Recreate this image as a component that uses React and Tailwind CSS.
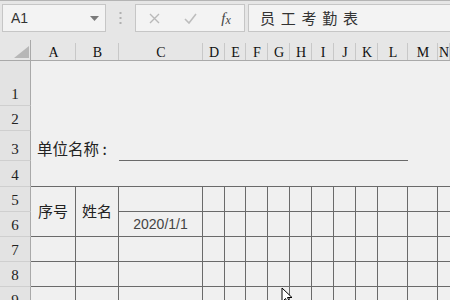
import React from "react";

const COLS = ["A", "B", "C", "D", "E", "F", "G", "H", "I", "J", "K", "L", "M", "N"];
const ROWS = [1, 2, 3, 4, 5, 6, 7, 8, 9];
const LINE = "border-[#6a6a6a]";

function RowHeader({ n }) {
  return (
    <div className="flex items-end justify-center border-r border-b border-r-[#a9a9a9] border-b-[#cfcfcf] bg-[#e3e3e3] pb-[3px] text-[15px] leading-[16px] text-[#222]" style={{ fontFamily: '"Liberation Serif", serif' }}>
      {n}
    </div>
  );
}

function cellClass(r, c) {
  const idx = COLS.indexOf(c);
  let cls = "flex items-center justify-center text-[#222]";
  if (r === 3 && idx >= 2 && idx <= 11) cls += ` border-b ${LINE}`;
  if (r === 4) cls += ` border-b ${LINE}`;
  if (r >= 5) {
    cls += ` border-b ${LINE}`;
    if (c !== "N") cls += " border-r";
  }
  return cls;
}

function Body() {
  const out = [];
  ROWS.forEach((r) => {
    out.push(<RowHeader key={"h" + r} n={r} />);
    COLS.forEach((c) => {
      if (r === 6 && (c === "A" || c === "B")) return;
      const k = c + r;
      if (r === 3 && c === "A") {
        out.push(
          <div key={k} className="col-span-2 flex items-end whitespace-nowrap pb-[3px] pl-[6px] text-[15.5px] leading-[20px] text-[#222]" style={{ fontFamily: '"Noto Sans CJK SC", sans-serif' }}>
            单位名称 :
          </div>
        );
        return;
      }
      if (r === 3 && c === "B") return;
      if (r === 5 && (c === "A" || c === "B")) {
        out.push(
          <div key={k} className={`row-span-2 flex items-center justify-center border-r border-b ${LINE} text-[15px] text-[#222]`} style={{ fontFamily: '"Noto Sans CJK SC", sans-serif' }}>
            {c === "A" ? "序号" : "姓名"}
          </div>
        );
        return;
      }
      if (r === 6 && c === "C") {
        out.push(
          <div key={k} className={`${cellClass(r, c)} text-[14px] text-[#444]`} style={{ fontFamily: '"Liberation Sans", sans-serif' }}>
            2020/1/1
          </div>
        );
        return;
      }
      out.push(<div key={k} className={cellClass(r, c)} />);
    });
  });
  return out;
}

export default function App() {
  return (
    <div className="relative h-[300px] w-[450px] overflow-hidden bg-[#f0f0f0]">
      {/* formula bar */}
      <div className="flex h-[40px] items-start gap-0 border-t border-[#b4b4b4] bg-[#e6e6e6] pt-[3px]">
        <div className="ml-[2px] flex h-[28px] w-[104px] items-center justify-between border border-[#c6c6c6] bg-[#f3f3f3] pl-[8px] pr-[6px]">
          <span className="text-[14px] text-[#333]" style={{ fontFamily: '"Liberation Sans", sans-serif' }}>A1</span>
          <svg width="9" height="5" viewBox="0 0 9 5"><path d="M0 0 H9 L4.5 5 Z" fill="#7a7a7a" /></svg>
        </div>
        <div className="flex h-[28px] w-[29px] items-center justify-center">
          <svg width="3" height="12" viewBox="0 0 3 12">
            <rect x="0.5" y="0" width="2" height="2" fill="#b0b0b0" />
            <rect x="0.5" y="5" width="2" height="2" fill="#b0b0b0" />
            <rect x="0.5" y="10" width="2" height="2" fill="#b0b0b0" />
          </svg>
        </div>
        <div className="flex h-[28px] w-[110px] items-center border border-[#c6c6c6] bg-[#f3f3f3]">
          <div className="flex w-[36px] justify-center">
            <svg width="11" height="11" viewBox="0 0 11 11"><path d="M1 1 L10 10 M10 1 L1 10" stroke="#b9b9b9" strokeWidth="1.4" /></svg>
          </div>
          <div className="flex w-[36px] justify-center">
            <svg width="13" height="11" viewBox="0 0 13 11"><path d="M1 6 L5 10 L12 1" stroke="#bdbdbd" strokeWidth="1.6" fill="none" /></svg>
          </div>
          <div className="flex w-[36px] justify-center text-[15px] italic text-[#444]" style={{ fontFamily: '"Liberation Serif", serif' }}>
            <span>f</span><span className="mt-[3px] text-[12px] leading-[20px]">x</span>
          </div>
        </div>
        <div className="ml-[3px] flex h-[28px] flex-1 items-center border border-r-0 border-[#c6c6c6] bg-[#f3f3f3] pl-[11px] text-[15px] tracking-[1.2px] text-[#333]" style={{ fontFamily: '"Noto Sans CJK SC", sans-serif' }}>
          员 工 考 勤 表
        </div>
      </div>

      {/* sheet */}
      <div className="grid grid-cols-[31px_45px_43px_84px_22px_21px_22px_22px_22px_22px_22px_22px_30px_30px_1fr] grid-rows-[21px_45px_25px_30px_26px_25px_25px_25px_25px_25px]">
        <div className="flex items-end justify-end border-r border-b border-r-[#a9a9a9] border-b-[#a9a9a9] bg-[#e6e6e6] pr-[1px] pb-[2px]">
          <svg width="15" height="12" viewBox="0 0 15 12"><path d="M15 0 L15 12 L0 12 Z" fill="#b7b7b7" /></svg>
        </div>
        {COLS.map((c) => (
          <div
            key={c}
            className="relative flex items-end justify-center border-b border-[#a9a9a9] bg-[#e6e6e6] text-[14px] leading-[14px] text-[#111] after:absolute after:right-0 after:top-[3px] after:bottom-0 after:w-px after:bg-[#c8c8c8]"
            style={{ fontFamily: '"Liberation Serif", serif' }}
          >
            {c}
          </div>
        ))}
        <Body />
      </div>

      {/* mouse pointer */}
      <svg className="absolute left-[281px] top-[287px]" width="12" height="18" viewBox="0 0 12 18">
        <path d="M1 1 L1 15 L4.5 11.5 L7 17 L9 16 L6.5 10.5 L11 10.5 Z" fill="#ffffff" stroke="#000" strokeWidth="1" />
      </svg>
    </div>
  );
}
